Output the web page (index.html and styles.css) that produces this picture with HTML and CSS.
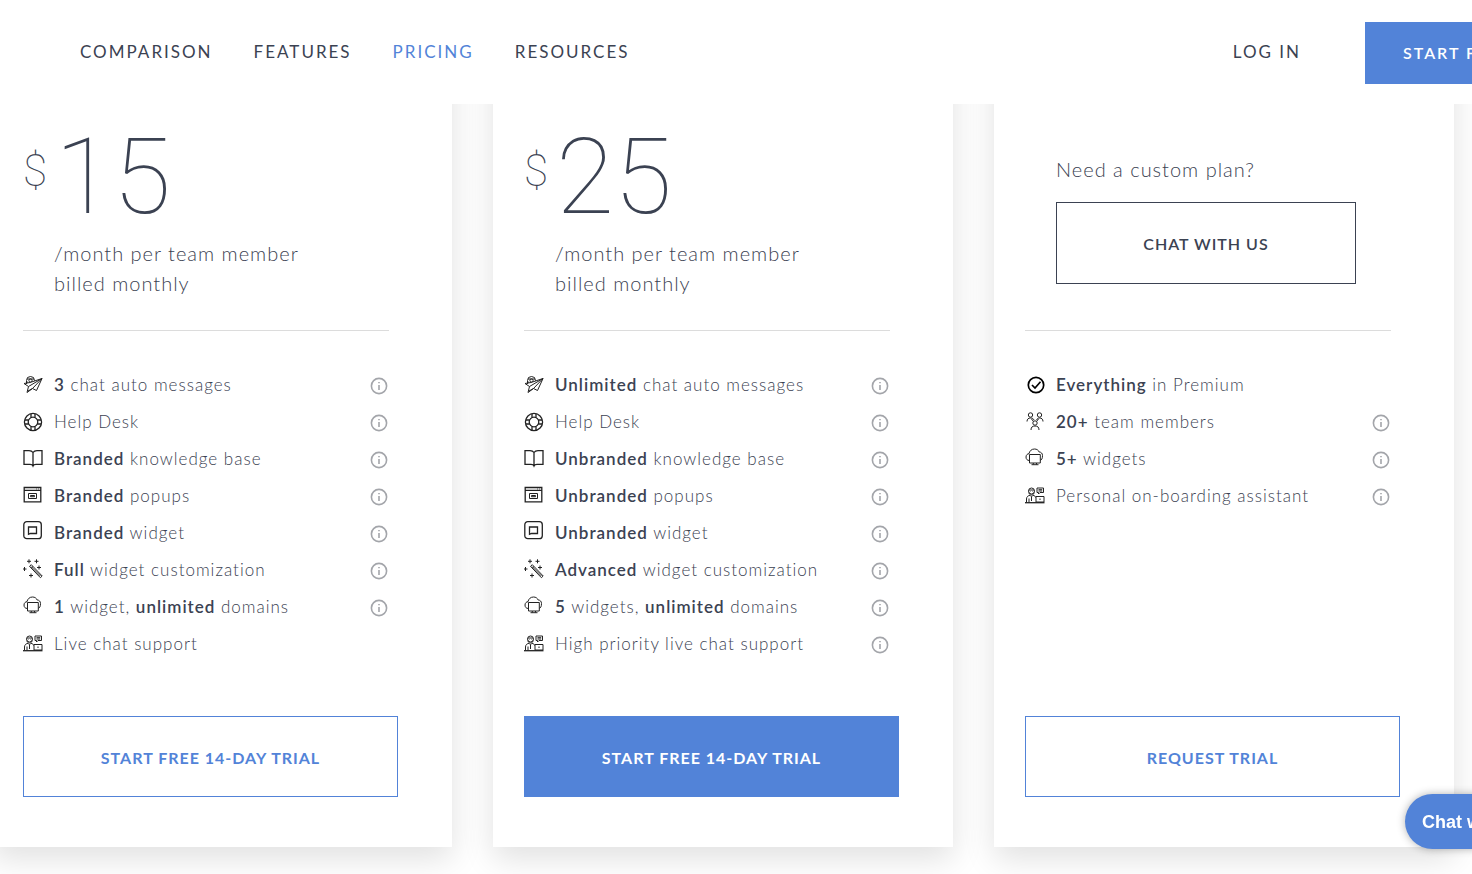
FILE: index.html
```html
<!DOCTYPE html>
<html lang="en">
<head>
    <meta charset="UTF-8">
    <meta name="viewport" content="width=device-width, initial-scale=1.0">
    <title>Pricing</title>
    <link rel="stylesheet" href="styles.css">
</head>
<body>
    <!-- Icon set -->
    <svg class="icon-set" aria-hidden="true">
        <symbol id="i-plane" viewBox="0 0 20 24">
            <circle cx="7.500" cy="7.500" r="4"/>
            <circle cx="7.500" cy="7.500" r="1.600"/>
            <path class="paper" d="M19 5.500 13.500 17.500 9.500 15.500 4 19.500 5.500 13.500 1 10.500 7 9.500z"/>
            <path d="M19 5.500 5.500 13.500M19 5.500 9.500 15.500M5 18l4.500-2.500M3.500 8v3M4 6h7"/>
        </symbol>
        <symbol id="i-help" viewBox="0 0 20 24">
            <g class="strong">
                <circle cx="10" cy="12" r="8.600"/>
                <circle cx="10" cy="12" r="4.800"/>
                <path d="M8 3.700v3.900M12 3.700v3.900M8 16.400v3.900M12 16.400v3.900M1.700 10h3.900M1.700 14h3.900M14.400 10h3.900M14.400 14h3.900"/>
            </g>
        </symbol>
        <symbol id="i-book" viewBox="0 0 20 24">
            <path class="strong" d="M10 5.500C9 4 7.500 3.600 6 3.600H1v13.800h6c1.500 0 2.500.3 3 1.600.5-1.300 1.500-1.600 3-1.600h6V3.600h-5c-1.500 0-3 .4-4 1.900zM10 5.500V18"/>
        </symbol>
        <symbol id="i-popup" viewBox="0 0 20 24">
            <path class="strong" d="M1.200 3.500h16.600v14.300H1.200zM1.200 6.300h16.600"/>
            <path d="M5.500 9.500h8v5h-8zM7.500 11.500h4v1.200h-4zM13 5h.7M15 5h.7"/>
        </symbol>
        <symbol id="i-widget" viewBox="0 0 20 24">
            <rect class="strong" x="0.800" y="0.700" width="17.500" height="17" rx="3"/>
            <path class="strong" d="M5.500 6h8v6.500h-6l-2 .8z"/>
        </symbol>
        <symbol id="i-wand" viewBox="0 0 20 24">
            <path d="M6.500 8.300 8.300 6.700 19.200 18 17.400 19.700zM10 8.500 8.300 10M8 8.500l9.500 9.500"/>
            <path d="M6 1.300v4M4 3.300h4M13.500 1.300v4M11.500 3.300h4M16 7.500v4M14 9.500h4M1.500 9v4M-.5 11h4M8 15.500v4M6 17.500h4"/>
        </symbol>
        <symbol id="i-cloud" viewBox="0 0 20 24">
            <path d="M4.500 13.500C2 13.500 1 12 1 10s1.500-3.300 3-3.300C4.500 4 6.500 2 9.500 2c2.300 0 4 1.200 4.700 3 2 0 3.300 1.500 3.300 3.500 0 3-.8 4.500-2.500 5"/>
            <path class="paper" d="M4.500 7.500h10.800v8.500H4.500z"/>
            <path d="M8.300 16v1.500M11.500 16v1.500M6.500 17.700h7"/>
        </symbol>
        <symbol id="i-person" viewBox="0 0 20 24">
            <circle cx="6.500" cy="7" r="3"/>
            <path d="M4 6h5M4 8.500c0 1.500 1 2.500 2.500 2.500S9 10 9 8.500M5.500 7.500h.4M7.500 7.500h.4M1.500 18v-3c0-2.500 2-3.500 3.500-3.700l1.500 1.500L8 11.300c1.500.2 2.500 1 2.500 2.200M6.500 13v4M4 14.500V18"/>
            <path d="M12 4h6.500v4.500H15L13.500 10V8.500H12zM13.500 5.700h3.700M13.500 7h3.700M11 12.500h8V18h-8zM15 14.500v1.500"/>
            <path class="strong" d="M0 18.700h19.500"/>
        </symbol>
        <symbol id="i-check" viewBox="0 0 20 24">
            <circle class="bold" cx="11" cy="12" r="7.700"/>
            <path class="bold" d="M7 12l3 3 5.500-6.200"/>
        </symbol>
        <symbol id="i-team" viewBox="0 0 20 24">
            <circle cx="5.500" cy="5" r="2.200"/>
            <circle cx="14.500" cy="5" r="2.200"/>
            <circle cx="10" cy="13" r="2.200"/>
            <path d="M2 11.500C2 9 3.500 8 5.500 8s3 .8 3.500 2M11.500 10c.5-1.200 1.500-2 3-2 2 0 3.500 1 3.500 3.500M6 20c0-3 1.500-4 4-4s4 1 4 4M6.500 9l2 2.500M13.500 9l-2 2.500"/>
        </symbol>
        <symbol id="i-info" viewBox="0 0 18 18">
            <circle cx="9" cy="9" r="7.600"/>
            <path d="M9 8v5M9 5v1.300"/>
        </symbol>
    </svg>

    <header class="header">
        <nav class="main-nav">
            <a href="#">COMPARISON</a>
            <a href="#">FEATURES</a>
            <a href="#" class="active">PRICING</a>
            <a href="#">RESOURCES</a>
        </nav>
        <div class="header-actions">
            <a href="#" class="login-link">LOG IN</a>
            <a href="#" class="header-btn">START FREE TRIAL</a>
        </div>
    </header>

    <main class="plans">
        <section class="plan">
            <div class="plan-head">
                <div class="price"><span class="currency">$</span><span class="amount">15</span></div>
                <p class="period">/month per team member<br>billed monthly</p>
            </div>
            <ul class="features">
                <li><svg class="icon"><use href="#i-plane"/></svg><span><b>3</b> chat auto messages</span><button class="info" aria-label="Info"><svg><use href="#i-info"/></svg></button></li>
                <li><svg class="icon"><use href="#i-help"/></svg><span>Help Desk</span><button class="info" aria-label="Info"><svg><use href="#i-info"/></svg></button></li>
                <li><svg class="icon"><use href="#i-book"/></svg><span><b>Branded</b> knowledge base</span><button class="info" aria-label="Info"><svg><use href="#i-info"/></svg></button></li>
                <li><svg class="icon"><use href="#i-popup"/></svg><span><b>Branded</b> popups</span><button class="info" aria-label="Info"><svg><use href="#i-info"/></svg></button></li>
                <li><svg class="icon"><use href="#i-widget"/></svg><span><b>Branded</b> widget</span><button class="info" aria-label="Info"><svg><use href="#i-info"/></svg></button></li>
                <li><svg class="icon"><use href="#i-wand"/></svg><span><b>Full</b> widget customization</span><button class="info" aria-label="Info"><svg><use href="#i-info"/></svg></button></li>
                <li><svg class="icon"><use href="#i-cloud"/></svg><span><b>1</b> widget, <b>unlimited</b> domains</span><button class="info" aria-label="Info"><svg><use href="#i-info"/></svg></button></li>
                <li><svg class="icon"><use href="#i-person"/></svg><span>Live chat support</span></li>
            </ul>
            <a href="#" class="btn">START FREE 14-DAY TRIAL</a>
        </section>

        <section class="plan">
            <div class="plan-head">
                <div class="price"><span class="currency">$</span><span class="amount">25</span></div>
                <p class="period">/month per team member<br>billed monthly</p>
            </div>
            <ul class="features">
                <li><svg class="icon"><use href="#i-plane"/></svg><span><b>Unlimited</b> chat auto messages</span><button class="info" aria-label="Info"><svg><use href="#i-info"/></svg></button></li>
                <li><svg class="icon"><use href="#i-help"/></svg><span>Help Desk</span><button class="info" aria-label="Info"><svg><use href="#i-info"/></svg></button></li>
                <li><svg class="icon"><use href="#i-book"/></svg><span><b>Unbranded</b> knowledge base</span><button class="info" aria-label="Info"><svg><use href="#i-info"/></svg></button></li>
                <li><svg class="icon"><use href="#i-popup"/></svg><span><b>Unbranded</b> popups</span><button class="info" aria-label="Info"><svg><use href="#i-info"/></svg></button></li>
                <li><svg class="icon"><use href="#i-widget"/></svg><span><b>Unbranded</b> widget</span><button class="info" aria-label="Info"><svg><use href="#i-info"/></svg></button></li>
                <li><svg class="icon"><use href="#i-wand"/></svg><span><b>Advanced</b> widget customization</span><button class="info" aria-label="Info"><svg><use href="#i-info"/></svg></button></li>
                <li><svg class="icon"><use href="#i-cloud"/></svg><span><b>5</b> widgets, <b>unlimited</b> domains</span><button class="info" aria-label="Info"><svg><use href="#i-info"/></svg></button></li>
                <li><svg class="icon"><use href="#i-person"/></svg><span>High priority live chat support</span><button class="info" aria-label="Info"><svg><use href="#i-info"/></svg></button></li>
            </ul>
            <a href="#" class="btn btn-filled">START FREE 14-DAY TRIAL</a>
        </section>

        <section class="plan">
            <div class="plan-head plan-head-custom">
                <p class="period">Need a custom plan?</p>
                <button class="btn btn-dark">CHAT WITH US</button>
            </div>
            <ul class="features">
                <li><svg class="icon"><use href="#i-check"/></svg><span><b>Everything</b> in Premium</span></li>
                <li><svg class="icon"><use href="#i-team"/></svg><span><b>20+</b> team members</span><button class="info" aria-label="Info"><svg><use href="#i-info"/></svg></button></li>
                <li><svg class="icon"><use href="#i-cloud"/></svg><span><b>5+</b> widgets</span><button class="info" aria-label="Info"><svg><use href="#i-info"/></svg></button></li>
                <li><svg class="icon"><use href="#i-person"/></svg><span>Personal on-boarding assistant</span><button class="info" aria-label="Info"><svg><use href="#i-info"/></svg></button></li>
            </ul>
            <a href="#" class="btn">REQUEST TRIAL</a>
        </section>
    </main>

    <button class="chat-button">Chat with us</button>
</body>
</html>
```
FILE: styles.css
```css
* {
    box-sizing: border-box;
}

body {
    margin: 0;
    font-family: 'Lato', 'Open Sans', sans-serif;
    color: #3b4252;
    background-color: #fff;
    overflow-x: hidden;
}

a {
    color: inherit;
    text-decoration: none;
}

button {
    font-family: inherit;
    color: inherit;
    cursor: pointer;
}

.icon-set {
    display: none;
}

/* Header */
.header {
    position: relative;
    z-index: 2;
    display: flex;
    align-items: center;
    justify-content: space-between;
    height: 104px;
    padding-top: 2px;
    padding-left: 80px;
    background-color: #fff;
    font-size: 17px;
    letter-spacing: 2px;
    overflow: hidden;
}

.main-nav {
    display: flex;
    gap: 41px;
    padding-bottom: 4px;
}

.main-nav .active {
    color: #5283d8;
}

.header-actions {
    display: flex;
    align-items: center;
    gap: 64px;
    margin-right: -132px;
}

.login-link {
    padding-bottom: 4px;
}

.header-btn {
    width: 239px;
    padding: 0 38px;
    line-height: 62px;
    background-color: #5283d8;
    color: #fff;
    font-size: 16px;
    font-weight: 600;
    white-space: nowrap;
}

/* Plans */
.plans {
    display: grid;
    grid-template-columns: repeat(3, 1fr);
    gap: 41px;
    margin: -60px 18px 0 -8px;
    padding-bottom: 27px;
}

.plan {
    display: flex;
    flex-direction: column;
    padding: 60px 54px 50px 31px;
    background-color: #fff;
    box-shadow: 0 12px 30px rgba(0, 0, 0, 0.12);
}

.plan-head {
    display: flex;
    flex-direction: column;
    justify-content: flex-end;
    height: 227px;
    margin-right: 9px;
    padding-bottom: 32px;
    border-bottom: 1px solid #dcdcdc;
}

.price {
    display: flex;
    align-items: flex-start;
    gap: 8px;
    margin-bottom: 8px;
    font-family: 'Roboto', sans-serif;
    font-weight: 100;
}

.currency {
    padding-top: 22px;
    font-size: 44px;
    line-height: 50px;
}

.amount {
    font-size: 106px;
    line-height: 106px;
}

.period {
    margin: 0 0 0 31px;
    font-size: 20px;
    line-height: 30px;
    font-weight: 300;
    letter-spacing: 1px;
}

.plan-head-custom {
    padding-bottom: 46px;
}

.plan-head-custom .period {
    margin-bottom: 18px;
}

/* Feature list */
.features {
    list-style: none;
    margin: 35px 9px 54px 0;
    padding: 0;
    font-size: 17px;
    font-weight: 300;
    letter-spacing: 1px;
}

.features li {
    display: flex;
    align-items: center;
    height: 37px;
}

.features b {
    font-weight: 600;
}

.icon {
    width: 20px;
    height: 24px;
    margin-right: 11px;
    fill: none;
    stroke: #222;
    stroke-width: 1;
    overflow: visible;
}

.paper {
    fill: #fff;
}

.strong {
    stroke-width: 1.3;
}

.bold {
    stroke: #000;
    stroke-width: 1.7;
}

.info {
    width: 18px;
    height: 18px;
    margin: 2px 1px 0 auto;
    padding: 0;
    border: none;
    background: none;
}

.info svg {
    display: block;
    width: 18px;
    height: 18px;
    fill: none;
    stroke: #a3a5aa;
    stroke-width: 1.6;
}

/* Buttons */
.btn {
    display: block;
    margin-top: auto;
    padding: 2px 0 0;
    border: 1px solid #5283d8;
    background-color: #fff;
    color: #5283d8;
    font-size: 16px;
    font-weight: 700;
    line-height: 77px;
    letter-spacing: 1px;
    text-align: center;
}

.btn-filled {
    background-color: #5283d8;
    color: #fff;
}

.btn-dark {
    width: 300px;
    margin: 0 0 0 31px;
    border-color: #3b4252;
    color: #3b4252;
    font-weight: 600;
    line-height: 78px;
}

/* Chat widget */
.chat-button {
    position: fixed;
    right: -73px;
    bottom: 25px;
    z-index: 3;
    width: 140px;
    height: 55px;
    padding: 2px 0 0 17px;
    border: none;
    border-radius: 28px;
    background-color: #5283d8;
    box-shadow: 0 0 8px rgba(0, 0, 0, 0.3);
    color: #fff;
    font-family: 'Liberation Sans', Arial, sans-serif;
    font-size: 18px;
    font-weight: 700;
    text-align: left;
    white-space: nowrap;
}
```
